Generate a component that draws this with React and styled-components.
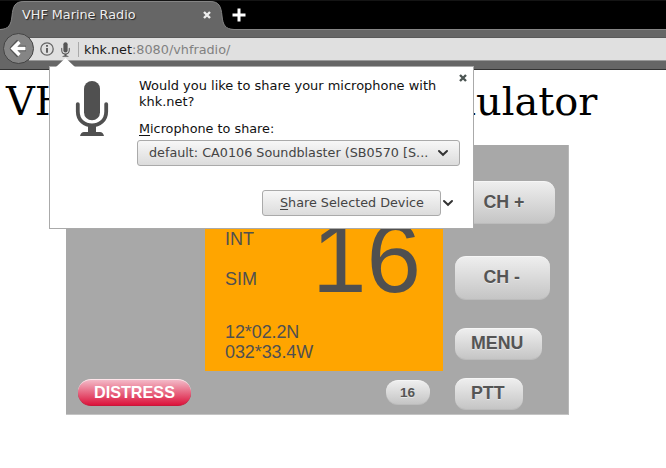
import React from "react";
import styled, { createGlobalStyle } from "styled-components";

const GlobalStyle = createGlobalStyle`
  * { box-sizing: border-box; }
  body { margin: 0; background: #fff; overflow: hidden; }
`;

const Window = styled.div`
  position: relative;
  width: 666px;
  height: 468px;
  overflow: hidden;
  background: #fff;
  font-family: "DejaVu Sans", sans-serif;
`;

const TabBar = styled.div`
  display: flex;
  height: 30px;
  background: linear-gradient(#000 28px, #858585 28px);
  border-top: 1px solid #141414;
`;

const TabShape = styled.svg`
  display: block;
  grid-area: 1 / 1;
`;

const Tab = styled.div`
  display: grid;
  width: 234px;
  height: 29px;
`;

const TabContent = styled.div`
  grid-area: 1 / 1;
  display: flex;
  align-items: center;
  justify-content: space-between;
  padding: 0 22px 2px 22px;
  height: 29px;
  color: #eee;
  font-size: 12.8px;
  text-shadow: 1px 1px 1px #222;
  z-index: 1;
`;

const NewTab = styled.svg`
  display: block;
  margin: 7px 0 0 -2px;
`;

const Toolbar = styled.div`
  display: flex;
  align-items: center;
  height: 40px;
  padding-left: 3px;
  background: #666;
  border-bottom: 1px solid #333;
`;

const BackButton = styled.div`
  width: 31px;
  height: 31px;
  flex: none;
  margin-top: -2px;
  border: 1px solid #444;
  border-radius: 50%;
  background: #858585;
  z-index: 1;
  svg { display: block; }
`;

const AddressBar = styled.div`
  flex: 1;
  display: flex;
  align-items: center;
  height: 24px;
  margin: -1px 0 0 -5px;
  padding-left: 11px;
  background: #e0e0e0;
  border-top: 1px solid #5a5a5a;
  border-bottom: 1px solid #999;
  font-size: 12.8px;
  color: #808080;
`;

const MicSlot = styled.span`
  display: flex;
  margin-left: 7px;
`;

const Separator = styled.span`
  width: 1px;
  height: 15px;
  margin: 0 5px 0 8px;
  background: #aaa;
`;

const Host = styled.span`
  color: #1a1a1a;
`;

const Heading = styled.h1`
  margin: 7px 0 0 6px;
  height: 68px;
  font: 400 39.9px/48px "DejaVu Serif", serif;
  color: #000;
  white-space: nowrap;
`;

const Radio = styled.div`
  display: grid;
  grid-template-columns: 139px 238px 125px;
  grid-template-rows: 226px 43px;
  width: 503px;
  height: 270px;
  margin-left: 66px;
  background: #a8a8a8;
  border-bottom: 1px solid #c4c4c4;
  border-right: 1px solid #b8b8b8;
  font-family: "Liberation Sans", sans-serif;
`;

const Lcd = styled.div`
  grid-area: 1 / 2;
  display: flex;
  flex-direction: column;
  justify-content: flex-end;
  padding: 0 0 9px 20px;
  background: #ffa500;
  color: #505050;
  font-size: 18px;
  line-height: 20px;
`;

const Status = styled.div`
  display: flex;
  height: 100px;
`;

const Flags = styled.div`
  display: flex;
  flex-direction: column;
  gap: 20px;
  width: 87px;
  padding-top: 7px;
`;

const Channel = styled.div`
  font-size: 98px;
  line-height: 73px;
`;

const Position = styled.div`
  letter-spacing: -0.1px;
`;

const Keys = styled.div`
  grid-area: 1 / 3 / 3 / 4;
  display: flex;
  flex-direction: column;
  align-items: flex-start;
  padding: 36px 0 0 12px;
`;

const Key = styled.div`
  display: flex;
  align-items: center;
  padding: 0 0 ${(p) => p.$lift ?? 1}px ${(p) => p.$inset}px;
  width: ${(p) => p.$w}px;
  height: ${(p) => p.$h}px;
  margin-bottom: ${(p) => p.$gap || 0}px;
  border-radius: ${(p) => p.$r || 11}px;
  border-top: 1px solid #f6f6f6;
  border-bottom: 1px solid #bcbcbc;
  background: linear-gradient(#eee, #c5c5c5);
  color: #555;
  font-weight: 700;
  font-size: ${(p) => p.$size || 17.8}px;
  text-shadow: 0 1px 0 ${(p) => p.$shadow || "#e8e8e8"};
`;

const DistressKey = styled(Key)`
  border-top-color: #ffe5ea;
  border-bottom-color: #c9173a;
  background: linear-gradient(#f3b9c7, #dc143c);
  color: #fff;
`;

const Cell = styled.div`
  grid-row: 2;
  grid-column: ${(p) => p.$col};
  display: flex;
  align-items: flex-start;
  justify-content: ${(p) => (p.$end ? "flex-end" : "flex-start")};
  padding: ${(p) => p.$pad};
`;

const Popup = styled.section`
  position: absolute;
  left: 49px;
  top: 66px;
  width: 425px;
  height: 163px;
  display: flex;
  background: #fff;
  border: 1px solid #aaa;
  font-size: 12.96px;
  line-height: 16px;
  color: #111;
  z-index: 3;
`;

const PopupArrow = styled.svg`
  position: absolute;
  left: 5px;
  top: -10px;
`;

const IconColumn = styled.div`
  width: 87px;
  padding: 13px 0 0 25px;
`;

const Body = styled.div`
  flex: 1;
  display: flex;
  flex-direction: column;
  padding-top: 11px;
`;

const Prompt = styled.div`
  display: flex;
  justify-content: space-between;
  padding: 0 5px 0 2px;
  white-space: nowrap;
`;

const PopupClose = styled.svg`
  margin-top: -5px;
`;

const Label = styled.div`
  margin: 11px 0 3px 2px;
  font-size: 12.8px;
`;

const Control = styled.div`
  display: flex;
  align-items: center;
  justify-content: space-between;
  width: ${(p) => p.$w}px;
  height: 26px;
  padding: 0 10px 0 ${(p) => p.$pad}px;
  border: 1px solid #aaa;
  border-radius: 3px;
  background: linear-gradient(#f7f7f7, #dcdcdc);
  color: #444;
  font-size: 12.75px;
  white-space: nowrap;
`;

const Actions = styled.div`
  display: flex;
  align-items: center;
  gap: 1px;
  margin: 24px 0 0 125px;
`;

const Mnemonic = styled.span`
  text-decoration: underline;
  text-underline-offset: 2px;
`;

const Chevron = () => (
  <svg width="12" height="8" viewBox="0 0 12 8">
    <path d="M2 2 L6 5.8 L10 2" fill="none" stroke="#333" strokeWidth="2" strokeLinecap="round" />
  </svg>
);

const Microphone = ({ width, height, color }) => (
  <svg width={width} height={height} viewBox="0 0 34 58" preserveAspectRatio="none">
    <rect x="9" y="1" width="16" height="40" rx="8" fill={color} />
    <path d="M2.8 24.5 V32 C2.8 51 31.2 51 31.2 32 V24.5" fill="none" stroke={color} strokeWidth="3.8" strokeLinecap="round" />
    <path d="M13 46 H21 V53 H25 Q28 53 29 57 H5 Q6 53 9 53 H13 Z" fill={color} />
  </svg>
);

const Cross = ({ color }) => (
  <svg width="10" height="10" viewBox="0 0 10 10">
    <path d="M2 2 L8 8 M8 2 L2 8" stroke={color} strokeWidth="2.4" />
  </svg>
);

export default function App() {
  return (
    <Window>
      <GlobalStyle />
      <TabBar>
        <Tab>
          <TabShape width="234" height="29" viewBox="0 0 234 29">
            <path d="M0 28.5 C9 28 11 24 12 15 C13 5 15 .5 24 .5 H210 C219 .5 221 5 222 15 C223 24 225 28 234 28.5 V30 H0 Z" fill="#666" stroke="#858585" />
          </TabShape>
          <TabContent>
            <span>VHF Marine Radio</span>
            <Cross color="#eee" />
          </TabContent>
        </Tab>
        <NewTab width="14" height="14" viewBox="0 0 14 14">
          <path d="M7 .5 V13.5 M.5 7 H13.5" stroke="#fff" strokeWidth="3" />
        </NewTab>
      </TabBar>
      <Toolbar>
        <BackButton>
          <svg width="29" height="29" viewBox="0 0 29 29">
            <path d="M15 7.5 L8.5 14.5 L15 21.5 M9 14.5 H22" fill="none" stroke="#555" strokeWidth="5.5" strokeLinejoin="round" />
            <path d="M15.5 8 L9 14.5 L15.5 21 M9.5 14.5 H21.5" fill="none" stroke="#fff" strokeWidth="3.6" />
          </svg>
        </BackButton>
        <AddressBar>
          <svg width="14" height="14" viewBox="0 0 14 14">
            <circle cx="7" cy="7" r="6.2" fill="none" stroke="#666" strokeWidth="1.3" />
            <path d="M7 6 V10.8 M7 3 V4.8" stroke="#555" strokeWidth="1.8" />
          </svg>
          <MicSlot>
            <Microphone width={9} height={15} color="#555" />
          </MicSlot>
          <Separator />
          <Host>khk.net</Host>:8080/vhfradio/
        </AddressBar>
      </Toolbar>
      <Heading>VHF Marine Radio Simulator</Heading>
      <Radio>
        <Lcd>
          <Status>
            <Flags>
              <span>INT</span>
              <span>SIM</span>
            </Flags>
            <Channel>16</Channel>
          </Status>
          <Position>
            <div>12*02.2N</div>
            <div>032*33.4W</div>
          </Position>
        </Lcd>
        <Keys>
          <Key $w={100} $h={43} $inset={28.5} $gap={32}>CH +</Key>
          <Key $w={95} $h={44} $inset={28.5} $gap={28}>CH -</Key>
          <Key $w={87} $h={32} $inset={16} $gap={18}>MENU</Key>
          <Key $w={68} $h={32} $inset={16}>PTT</Key>
        </Keys>
        <Cell $col={1} $pad="8px 0 0 12px">
          <DistressKey $w={113} $h={27} $inset={16} $size={16.2} $r={13} $lift={0} $shadow="transparent">DISTRESS</DistressKey>
        </Cell>
        <Cell $col={2} $end $pad="9px 13px 0 0">
          <Key $w={44} $h={25} $inset={14} $size={13.6} $r={12} $lift={0}>16</Key>
        </Cell>
      </Radio>
      <Popup>
        <PopupArrow width="22" height="11" viewBox="0 0 22 11">
          <path d="M1 10 L10.5 1 L20 10 V11 H1 Z" fill="#fff" />
        </PopupArrow>
        <IconColumn>
          <Microphone width={34} height={57} color="#505050" />
        </IconColumn>
        <Body>
          <Prompt>
            <div>Would you like to share your microphone with<br />khk.net?</div>
            <PopupClose width="10" height="10" viewBox="0 0 10 10">
              <path d="M2 2 L8 8 M8 2 L2 8" stroke="#4c5553" strokeWidth="2.4" />
            </PopupClose>
          </Prompt>
          <Label><Mnemonic>M</Mnemonic>icrophone to share:</Label>
          <Control $w={323} $pad={11}>
            default: CA0106 Soundblaster (SB0570 [S...
            <Chevron />
          </Control>
          <Actions>
            <Control $w={179} $pad={17}>
              <span><Mnemonic>S</Mnemonic>hare Selected Device</span>
            </Control>
            <Chevron />
          </Actions>
        </Body>
      </Popup>
    </Window>
  );
}
